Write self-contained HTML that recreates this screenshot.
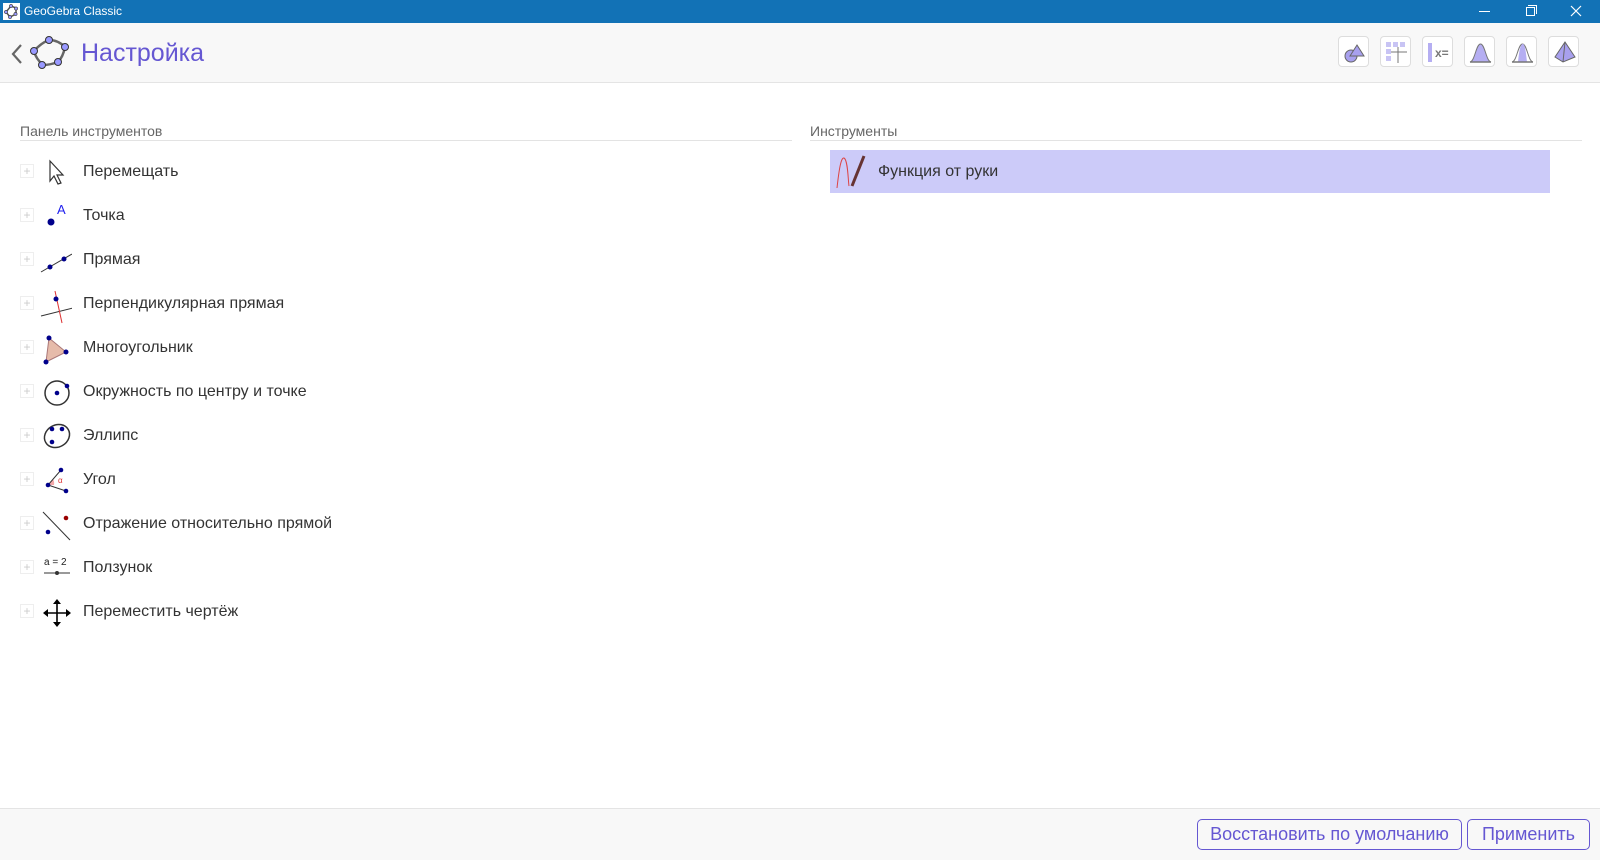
<!DOCTYPE html>
<html><head><meta charset="utf-8"><style>
*{margin:0;padding:0;box-sizing:border-box}
body{width:1600px;height:860px;background:#fff;font-family:"Liberation Sans",Arial,sans-serif;position:relative;overflow:hidden;color:#333}
.tb{position:absolute;left:0;top:0;width:1600px;height:23px;background:#1272b6;color:#fff;font-size:12px}
.hd{position:absolute;left:0;top:23px;width:1600px;height:60px;background:#f8f8f8;border-bottom:1px solid #e4e4e4}
.tbtn{position:absolute;top:13px;width:31px;height:31px;border:1px solid #ddd;border-radius:4px;background:#fff}
.sec{position:absolute;font-size:14px;color:#666}
.line{position:absolute;height:1px;background:#e3e3e3}
.row{position:absolute;left:0;height:40px;width:780px}
.row .pl{position:absolute;left:20px;top:12px;width:14px;height:14px;border:1px solid #eee;color:#ccc;font-size:12px;line-height:12px;text-align:center}
.row svg{position:absolute;left:40px;top:4px}
.row span{position:absolute;left:83px;top:11px;font-size:16px;color:#333}
.ft{position:absolute;left:0;top:808px;width:1600px;height:52px;background:#f8f8f8;border-top:1px solid #e4e4e4}
.btn{position:absolute;top:10px;height:31px;border:1px solid #6557d2;border-radius:5px;color:#6557d2;font-size:18px;line-height:29px;text-align:center;background:#f8f8f8}
</style></head><body>
<div class="tb">
<svg style="position:absolute;left:3px;top:3px" width="17" height="17" viewBox="0 0 17 17"><rect width="17" height="17" fill="#fff"/><path d="M8 3L13 5L13 11L7 14L3 9Z" fill="none" stroke="#555" stroke-width="1.5"/><g fill="#99f" stroke="#333" stroke-width=".6"><circle cx="8" cy="3" r="1.6"/><circle cx="13" cy="5.5" r="1.6"/><circle cx="12.5" cy="11" r="1.6"/><circle cx="7" cy="14" r="1.6"/><circle cx="3" cy="9" r="1.6"/></g></svg>
<span style="position:absolute;left:24px;top:4px">GeoGebra Classic</span>
<div style="position:absolute;left:1479px;top:11px;width:11px;height:1px;background:#fff"></div>
<div style="position:absolute;left:1526px;top:7px;width:9px;height:9px;border:1px solid #fff"></div>
<div style="position:absolute;left:1528px;top:5px;width:9px;height:9px;border-top:1px solid #fff;border-right:1px solid #fff"></div>
<svg style="position:absolute;left:1570px;top:5px" width="12" height="12"><path d="M1 1L11 11M11 1L1 11" stroke="#fff" stroke-width="1.2"/></svg>
</div>
<div class="hd">
<svg style="position:absolute;left:10px;top:20px" width="14" height="22"><path d="M11 2L3 11L11 20" fill="none" stroke="#666" stroke-width="2.2"/></svg>
<svg style="position:absolute;left:30px;top:12px" width="42" height="38" viewBox="0 0 42 38"><path d="M19 5Q28 5 35 12Q33 22 28 27Q20 30 13 30Q6 24 4 16Q11 8 19 5Z" fill="none" stroke="#666" stroke-width="2.5"/><g fill="#99f" stroke="#333" stroke-width="1"><circle cx="19" cy="5" r="3.5"/><circle cx="35" cy="12" r="3.5"/><circle cx="28" cy="27" r="3.5"/><circle cx="12" cy="30" r="3.5"/><circle cx="4" cy="16" r="3.5"/></g></svg>
<div style="position:absolute;left:81px;top:16px;font-size:25px;color:#6557d2">Настройка</div>
<div class="tbtn" style="left:1338px"><svg width="31" height="31"><circle cx="12" cy="19" r="6" fill="#a8a0ee" stroke="#666"/><path d="M18 8L25 19H11Z" fill="#a8a0ee" stroke="#666"/></svg></div>
<div class="tbtn" style="left:1380px"><svg width="31" height="31"><rect x="5" y="5" width="5" height="5" fill="#c8c4f4"/><rect x="12" y="5" width="5" height="5" fill="#c8c4f4"/><rect x="19" y="5" width="5" height="5" fill="#c8c4f4"/><rect x="5" y="12" width="5" height="5" fill="#c8c4f4"/><rect x="5" y="19" width="5" height="5" fill="#c8c4f4"/><path d="M10 15H26M17 10V26" stroke="#777"/></svg></div>
<div class="tbtn" style="left:1422px"><svg width="31" height="31"><rect x="5" y="6" width="4" height="19" fill="#b5aef2"/><text x="12" y="20" font-size="12" font-weight="bold" fill="#777" font-family="Liberation Sans">x=</text></svg></div>
<div class="tbtn" style="left:1464px"><svg width="31" height="31"><path d="M5 25C10 24 11 7 15.5 7S21 24 26 25Z" fill="#b5aef2" stroke="#777"/><path d="M5 25H26" stroke="#777" stroke-width="1.5"/></svg></div>
<div class="tbtn" style="left:1506px"><svg width="31" height="31"><path d="M5 25C10 24 11 7 15.5 7S21 24 26 25" fill="none" stroke="#777"/><path d="M11 25C12 16 13 8 15.5 7S19 16 20 25Z" fill="#b5aef2"/><path d="M5 25H26" stroke="#777" stroke-width="1.5"/></svg></div>
<div class="tbtn" style="left:1548px"><svg width="31" height="31"><path d="M16 5L6 20L14 25L26 20Z" fill="#a8a0ee" stroke="#666"/><path d="M16 5L14 25" stroke="#666"/></svg></div>
</div>

<div class="sec" style="left:20px;top:123px">Панель инструментов</div>
<div class="line" style="left:20px;top:140px;width:772px"></div>
<div class="sec" style="left:810px;top:123px">Инструменты</div>
<div class="line" style="left:810px;top:140px;width:772px"></div>
<div style="position:absolute;left:830px;top:150px;width:720px;height:43px;background:#cccbf9"></div>
<svg style="position:absolute;left:834px;top:152px" width="36" height="38"><path d="M3 36C5 18 7 5 10 6C14 8 14 28 15 34" fill="none" stroke="#d44" stroke-width="1"/><path d="M18 34L30 4" stroke="#633" stroke-width="3"/></svg>
<div style="position:absolute;left:878px;top:163px;font-size:16px;color:#333">Функция от руки</div>

<div class="row" style="top:152px"><div class="pl">+</div><svg width="32" height="32"><path d="M10 5L10 25L14 20L18 28L21 27L17 19L23 19Z" fill="#fff" stroke="#333" stroke-width="1.2"/></svg><span>Перемещать</span></div>
<div class="row" style="top:196px"><div class="pl">+</div><svg width="32" height="32"><circle cx="11" cy="22" r="3.5" fill="#00008b"/><text x="17" y="14" font-size="13" fill="#22e" font-family="Liberation Sans">A</text></svg><span>Точка</span></div>
<div class="row" style="top:240px"><div class="pl">+</div><svg width="32" height="32"><path d="M1 28L32 10" stroke="#333"/><circle cx="10" cy="23" r="2.5" fill="#00008b"/><circle cx="24" cy="15" r="2.5" fill="#00008b"/></svg><span>Прямая</span></div>
<div class="row" style="top:284px"><div class="pl">+</div><svg width="32" height="36"><path d="M1 28L33 20" stroke="#333"/><path d="M15 3L22 35" stroke="#d33"/><circle cx="16" cy="11" r="2.5" fill="#00008b"/></svg><span>Перпендикулярная прямая</span></div>
<div class="row" style="top:328px"><div class="pl">+</div><svg width="32" height="34"><path d="M9 6L26 20L6 30Z" fill="#e6bbaa"/><path d="M9 6L26 20L6 30Z" fill="none" stroke="#a77"/><circle cx="9" cy="6" r="2.5" fill="#00008b"/><circle cx="26" cy="20" r="2.5" fill="#00008b"/><circle cx="6" cy="30" r="2.5" fill="#00008b"/></svg><span>Многоугольник</span></div>
<div class="row" style="top:372px"><div class="pl">+</div><svg width="32" height="32"><circle cx="17" cy="17" r="12" fill="none" stroke="#333" stroke-width="1.5"/><circle cx="17" cy="17" r="2.3" fill="#00008b"/><circle cx="27" cy="10" r="2.3" fill="#00008b"/></svg><span>Окружность по центру и точке</span></div>
<div class="row" style="top:416px"><div class="pl">+</div><svg width="32" height="32"><ellipse cx="17" cy="16" rx="13" ry="11" transform="rotate(-30 17 16)" fill="none" stroke="#333" stroke-width="1.5"/><circle cx="12" cy="9" r="2.3" fill="#00008b"/><circle cx="22" cy="9" r="2.3" fill="#00008b"/><circle cx="12" cy="22" r="2.3" fill="#00008b"/></svg><span>Эллипс</span></div>
<div class="row" style="top:460px"><div class="pl">+</div><svg width="32" height="32"><path d="M8 21L14 21A9 9 0 0 0 13 15Z" fill="#f4a8a8"/><path d="M21 6L8 21L26 27" fill="none" stroke="#333"/><circle cx="21" cy="6" r="2.3" fill="#00008b"/><circle cx="8" cy="21" r="2.3" fill="#00008b"/><circle cx="26" cy="27" r="2.3" fill="#00008b"/><text x="18" y="19" font-size="8" fill="#d33">α</text></svg><span>Угол</span></div>
<div class="row" style="top:504px"><div class="pl">+</div><svg width="32" height="34"><path d="M3 4L30 32" stroke="#333"/><circle cx="26" cy="10" r="2.3" fill="#900"/><circle cx="8" cy="24" r="2.3" fill="#00008b"/></svg><span>Отражение относительно прямой</span></div>
<div class="row" style="top:548px"><div class="pl">+</div><svg width="32" height="32"><text x="4" y="13" font-size="10" fill="#222" font-family="Liberation Sans">a = 2</text><path d="M4 21H30" stroke="#333"/><circle cx="17" cy="21" r="2" fill="#333"/></svg><span>Ползунок</span></div>
<div class="row" style="top:592px"><div class="pl">+</div><svg width="32" height="32"><path d="M17 5V29M5 17H29" stroke="#000" stroke-width="1.6"/><path d="M17 3L13 8H21ZM17 31L13 26H21ZM3 17L8 13V21ZM31 17L26 13V21Z" fill="#000"/></svg><span>Переместить чертёж</span></div>

<div class="ft">
<div class="btn" style="left:1197px;width:265px">Восстановить по умолчанию</div>
<div class="btn" style="left:1467px;width:123px">Применить</div>
</div>
</body></html>
